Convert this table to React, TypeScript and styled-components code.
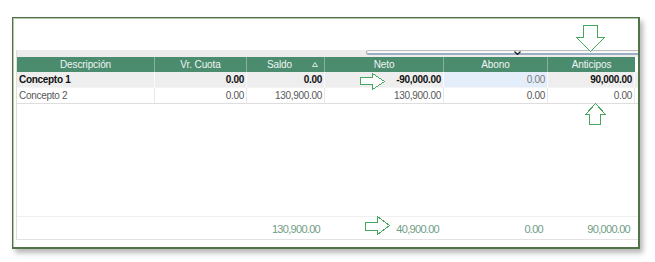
import React from "react";
import styled, { createGlobalStyle } from "styled-components";

const Global = createGlobalStyle`
  html, body { margin: 0; padding: 0; background: #ffffff; }
  body { font-family: "Liberation Sans", Arial, sans-serif; }
`;

const COLS = "138px 92px 78px 119px 104px 87px";

const Page = styled.div`
  position: relative;
  width: 655px;
  height: 262px;
  overflow: hidden;
  padding: 17px 0 0 12px;
  box-sizing: border-box;
`;

const Frame = styled.div`
  width: 628px;
  height: 232px;
  box-sizing: border-box;
  border-style: solid;
  border-color: #52724a;
  border-width: 1px 2px 2px 1px;
  box-shadow: inset 1px 1px 0 #b4c4aa, 3px 4px 5px rgba(0, 0, 0, 0.28);
  background: #ffffff;
  display: flex;
  flex-direction: column;
`;

const TopSpace = styled.div`
  height: 32px;
  flex: none;
`;

const Panel = styled.div`
  margin-left: 3px;
  height: 190px;
  box-sizing: border-box;
  border-left: 1px solid #dedede;
  border-bottom: 1px solid #e2e2e2;
  display: flex;
  flex-direction: column;
`;

const Strip = styled.div`
  height: 7px;
  flex: none;
  background: #ececec;
  display: flex;
  align-items: flex-start;
  padding-left: 349px;
`;

const Bar = styled.div`
  position: relative;
  flex: 1;
  height: 2px;
  background: #f7f7f7;
  border-top: 1px solid #bdbdbd;
  border-left: 1px solid #a9a9a9;
  border-bottom: 2px solid #9cb0c5;
  border-radius: 3px 0 0 3px;
`;

const Chevron = styled.svg`
  position: absolute;
  left: 147px;
  top: 0px;
`;

const Grid = styled.div<{ $height: number }>`
  display: grid;
  grid-template-columns: ${COLS};
  height: ${(p) => p.$height}px;
  flex: none;
`;

const HeadCell = styled.div<{ $last?: boolean; $sort?: boolean }>`
  position: relative;
  background: #4b8b6e;
  color: #f0f6f2;
  font-size: 10px;
  letter-spacing: -0.1px;
  display: flex;
  align-items: center;
  justify-content: center;
  padding-right: ${(p) => (p.$sort ? "12px" : "0")};
  border-right: ${(p) => (p.$last ? "none" : "1px solid #86b29a")};
  box-sizing: border-box;
`;

const SortMark = styled.svg`
  position: absolute;
  right: 6px;
  top: 5px;
`;

const Row = styled(Grid)<{ $selected?: boolean }>`
  background: ${(p) => (p.$selected ? "#eeeeee" : "#ffffff")};
  border-bottom: 1px solid ${(p) => (p.$selected ? "#f4f4f4" : "#dedede")};
  box-sizing: border-box;
`;

const Cell = styled.div<{
  $left?: boolean;
  $bold?: boolean;
  $tone?: "dark" | "gray" | "light";
  $hl?: boolean;
  $sep?: string;
}>`
  font-size: 10px;
  letter-spacing: -0.3px;
  font-weight: ${(p) => (p.$bold ? 700 : 400)};
  color: ${(p) =>
    p.$tone === "dark" ? "#111111" : p.$tone === "light" ? "#7a7a7a" : "#585858"};
  background: ${(p) => (p.$hl ? "#e4eefa" : "transparent")};
  display: flex;
  align-items: center;
  justify-content: ${(p) => (p.$left ? "flex-start" : "flex-end")};
  padding: 0 2px;
  border-right: 1px solid ${(p) => p.$sep || "#e8e8e8"};
  box-sizing: border-box;
  white-space: nowrap;
`;

const Filler = styled.div`
  flex: 1;
`;

const Footer = styled.div`
  display: grid;
  grid-template-columns: ${COLS};
  height: 23px;
  border-top: 1px solid #efefef;
  box-sizing: border-box;
  flex: none;
`;

const FootCell = styled.div`
  font-size: 11px;
  letter-spacing: -0.7px;
  color: #6f9d85;
  display: flex;
  align-items: center;
  justify-content: flex-end;
  padding-right: 5px;
  padding-top: 1px;
  box-sizing: border-box;
`;

const Arrow = styled.svg<{ $x: number; $y: number }>`
  position: absolute;
  left: ${(p) => p.$x}px;
  top: ${(p) => p.$y}px;
  overflow: visible;
`;

type ArrowProps = { x: number; y: number; w: number; h: number; points: string };

const OutlineArrow = ({ x, y, w, h, points }: ArrowProps) => (
  <Arrow $x={x} $y={y} width={w} height={h} viewBox={`0 0 ${w} ${h}`}>
    <polygon
      points={points}
      fill="#ffffff"
      stroke="#45a85d"
      strokeWidth="1"
      strokeLinejoin="miter"
      shapeRendering="crispEdges"
    />
  </Arrow>
);

type RowData = {
  desc: string;
  cuota: string;
  saldo: string;
  neto: string;
  abono: string;
  anticipos: string;
};

const rows: RowData[] = [
  { desc: "Concepto 1", cuota: "0.00", saldo: "0.00", neto: "-90,000.00", abono: "0.00", anticipos: "90,000.00" },
  { desc: "Concepto 2", cuota: "0.00", saldo: "130,900.00", neto: "130,900.00", abono: "0.00", anticipos: "0.00" },
];

export default function App() {
  return (
    <Page>
      <Global />
      <Frame>
        <TopSpace />
        <Panel>
          <Strip>
            <Bar>
              <Chevron width="7" height="4" viewBox="0 0 7 4">
                <polyline points="0.5,0.5 3.5,3.5 6.5,0.5" fill="none" stroke="#222" strokeWidth="1.3" />
              </Chevron>
            </Bar>
          </Strip>
          <Grid $height={15}>
            <HeadCell>Descripción</HeadCell>
            <HeadCell>Vr. Cuota</HeadCell>
            <HeadCell $sort>
              Saldo
              <SortMark width="6" height="5" viewBox="0 0 6 5">
                <polygon points="3,0.5 5.5,4.5 0.5,4.5" fill="none" stroke="#e8f1eb" strokeWidth="0.9" />
              </SortMark>
            </HeadCell>
            <HeadCell>Neto</HeadCell>
            <HeadCell>Abono</HeadCell>
            <HeadCell $last>Anticipos</HeadCell>
          </Grid>
          {rows.map((r, i) => {
            const sel = i === 0;
            const tone = sel ? "dark" : "gray";
            const sep = sel ? "#fbfbfb" : "#e8e8e8";
            return (
              <Row key={r.desc} $height={16} $selected={sel}>
                <Cell $left $bold={sel} $tone={tone} $sep={sep}>{r.desc}</Cell>
                <Cell $bold={sel} $tone={tone} $sep={sep}>{r.cuota}</Cell>
                <Cell $bold={sel} $tone={tone} $sep={sep}>{r.saldo}</Cell>
                <Cell $bold={sel} $tone={tone} $sep={sep}>{r.neto}</Cell>
                <Cell $tone={sel ? "light" : "gray"} $hl={sel} $sep={sep}>{r.abono}</Cell>
                <Cell $bold={sel} $tone={tone} $sep={sep}>{r.anticipos}</Cell>
              </Row>
            );
          })}
          <Filler />
          <Footer>
            <FootCell />
            <FootCell />
            <FootCell>130,900.00</FootCell>
            <FootCell>40,900.00</FootCell>
            <FootCell>0.00</FootCell>
            <FootCell>90,000.00</FootCell>
          </Footer>
        </Panel>
      </Frame>
      <OutlineArrow x={574} y={24} w={32} h={29} points="9.5,1.5 23.5,1.5 23.5,13.5 30.5,13.5 16.5,27.5 2.5,13.5 9.5,13.5" />
      <OutlineArrow x={584} y={102} w={24} h={24} points="11.5,1.5 21.5,12.5 16.5,12.5 16.5,22.5 5.5,22.5 5.5,12.5 1.5,12.5" />
      <OutlineArrow x={359} y={72} w={27} h={19} points="1.5,5.5 13.5,5.5 13.5,1.5 25.5,9.5 13.5,17.5 13.5,12.5 1.5,12.5" />
      <OutlineArrow x={364} y={215} w={27} h={21} points="1.5,7.5 13.5,7.5 13.5,1.5 25.5,10.5 13.5,19.5 13.5,15.5 1.5,15.5" />
    </Page>
  );
}
